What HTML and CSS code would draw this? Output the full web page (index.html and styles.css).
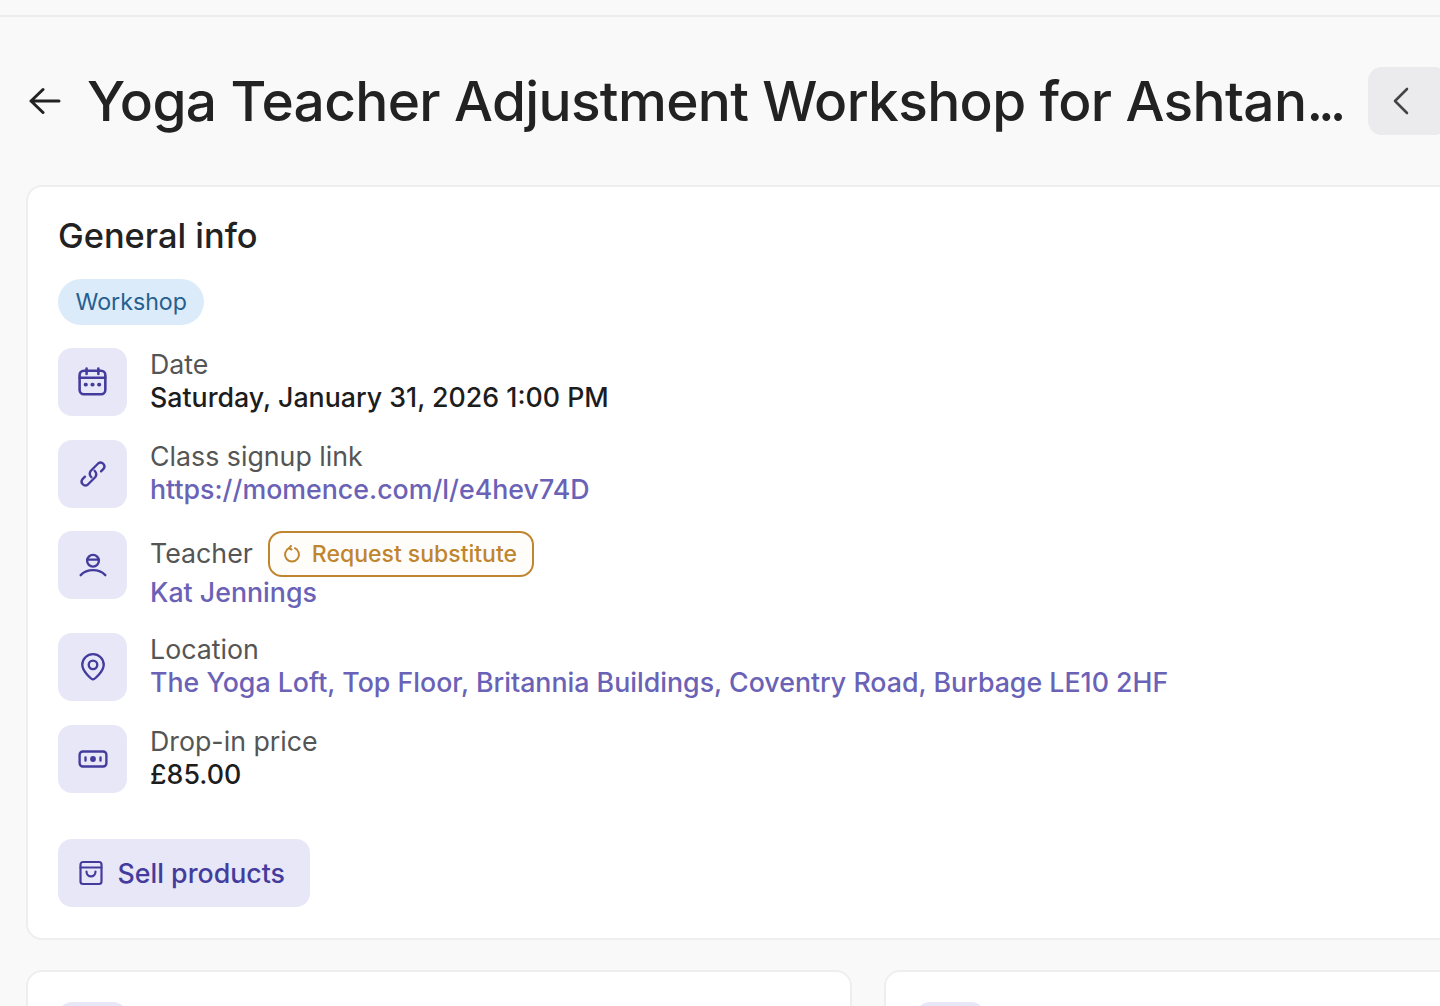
FILE: index.html
```html
<!DOCTYPE html>
<html lang="en">
<head>
    <meta charset="UTF-8">
    <meta name="viewport" content="width=device-width, initial-scale=1.0">
    <title>Yoga Teacher Adjustment Workshop</title>
    <link rel="stylesheet" href="styles.css">
</head>
<body>
    <div class="topbar"></div>
    <div class="page">
        <div class="header">
            <svg class="back-icon" viewBox="0 0 32 28" fill="none" stroke="#222" stroke-width="3" stroke-linecap="round" stroke-linejoin="round"><path d="M2 14h28M14 2.500 2 14l12 11.500"/></svg>
            <h1 class="title">Yoga Teacher Adjustment Workshop for Ashtan<span class="title-dots">...</span></h1>
            <button class="nav-btn">
                <svg viewBox="0 0 18 28" width="18" height="28" fill="none" stroke="#444" stroke-width="2.600" stroke-linecap="round" stroke-linejoin="round"><path d="M15 2 3 14l12 12"/></svg>
            </button>
        </div>

        <div class="card">
            <h2 class="card-title">General info</h2>
            <span class="badge">Workshop</span>

            <div class="info-list">
                <div class="info-row">
                    <div class="icon-box">
                        <svg viewBox="0 0 28 28" width="30" height="30" fill="none" stroke="#443c9c" stroke-width="2.400" stroke-linecap="round" stroke-linejoin="round"><rect x="1.500" y="3.500" width="24" height="22" rx="4"/><path d="M1.500 10h24M8 1.500v5M19 1.500v5"/><path d="M7 16.500h.5M13.300 16.500h.5M19.500 16.500h.5" stroke-width="3.400"/></svg>
                    </div>
                    <div class="info-text">
                        <div class="info-label">Date</div>
                        <div class="info-value">Saturday, January 31, 2026 1:00 PM</div>
                    </div>
                </div>

                <div class="info-row">
                    <div class="icon-box">
                        <svg viewBox="0 0 28 28" width="30" height="30" fill="none" stroke="#443c9c" stroke-width="2.200" stroke-linecap="round" stroke-linejoin="round"><path d="M12.500 17c-1.500-1.500-2-4-.5-6l7-7a3.600 3.600 0 0 1 5 5l-2.500 2.500"/><path d="M15.500 11c1.500 1.500 2 4 .5 6l-7 7a3.600 3.600 0 0 1-5-5l2.500-2.500"/></svg>
                    </div>
                    <div class="info-text">
                        <div class="info-label">Class signup link</div>
                        <a class="info-link" href="#">https://momence.com/l/e4hev74D</a>
                    </div>
                </div>

                <div class="info-row">
                    <div class="icon-box">
                        <svg viewBox="0 0 28 28" width="30" height="30" fill="none" stroke="#443c9c" stroke-width="2.200" stroke-linecap="round" stroke-linejoin="round"><circle cx="14" cy="10" r="5.500"/><path d="M8.500 9h11M2.500 23.500c3-3.200 7-4.700 11.500-4.700s8.500 1.500 11.500 4.700"/></svg>
                    </div>
                    <div class="info-text">
                        <div class="teacher-line">
                            <div class="info-label">Teacher</div>
                            <button class="sub-btn">
                                <svg viewBox="0 0 20 20" width="20" height="20" fill="none" stroke="#c0852f" stroke-width="2" stroke-linecap="round" stroke-linejoin="round"><path d="M7 4.200a7 7 0 1 0 6 0M7 4.200 9 2M7 4.200 9.500 5.500"/></svg>
                                Request substitute
                            </button>
                        </div>
                        <a class="info-link" href="#">Kat Jennings</a>
                    </div>
                </div>

                <div class="info-row">
                    <div class="icon-box">
                        <svg viewBox="0 0 28 28" width="30" height="30" fill="none" stroke="#443c9c" stroke-width="2.200" stroke-linecap="round" stroke-linejoin="round"><path d="M14 25.500c-1 0-10-7-10-13.500a10 10 0 0 1 20 0C24 18.500 15 25.500 14 25.500z"/><circle cx="14" cy="12" r="4"/></svg>
                    </div>
                    <div class="info-text">
                        <div class="info-label">Location</div>
                        <a class="info-link" href="#">The Yoga Loft, Top Floor, Britannia Buildings, Coventry Road, Burbage LE10 2HF</a>
                    </div>
                </div>

                <div class="info-row">
                    <div class="icon-box">
                        <svg viewBox="0 0 28 28" width="30" height="30" fill="none" stroke="#443c9c" stroke-width="2.200" stroke-linecap="round" stroke-linejoin="round"><rect x="1.500" y="7" width="25" height="14" rx="3"/><path d="M7 12.500v3M21 12.500v3"/><circle cx="14" cy="14" r="1.600" fill="#443c9c"/></svg>
                    </div>
                    <div class="info-text">
                        <div class="info-label">Drop-in price</div>
                        <div class="info-value">£85.00</div>
                    </div>
                </div>
            </div>

            <button class="sell-btn">
                <svg viewBox="0 0 28 28" width="28" height="28" fill="none" stroke="#443c9c" stroke-width="2.200" stroke-linecap="round" stroke-linejoin="round"><path d="M6 3h16a2.500 2.500 0 0 1 2.500 2.500v17A2.500 2.500 0 0 1 22 25H6a2.500 2.500 0 0 1-2.500-2.500v-17A2.500 2.500 0 0 1 6 3z"/><path d="M3.500 8.500h21M9.500 12.500c0 6.500 9 6.500 9 0"/></svg>
                Sell products
            </button>
        </div>

        <div class="bottom-cards">
            <div class="card small-card"><div class="icon-box"></div></div>
            <div class="card small-card"><div class="icon-box"></div></div>
        </div>
    </div>
</body>
</html>
```

FILE: styles.css
```css
html, body {
    margin: 0;
    height: 1006px;
    overflow: hidden;
}
body {
    font-family: Inter, "Liberation Sans", sans-serif;
    background-color: #f9f9f9;
    color: #222;
}
.topbar {
    height: 15px;
    border-bottom: 2px solid #ececec;
}
.page {
    width: 1500px;
    padding: 50px 0 0 26px;
}
.header {
    display: flex;
    align-items: center;
    height: 68px;
    margin-bottom: 50px;
}
.back-icon {
    width: 32px;
    height: 28px;
    margin-left: 3px;
    margin-right: 26px;
    flex: none;
}
.title {
    width: 1257px;
    margin: 0;
    font-size: 55px;
    font-weight: 500;
    letter-spacing: -0.65px;
    color: #222;
    white-space: nowrap;
    flex: none;
}
.title-dots {
    letter-spacing: -5px;
}
.nav-btn {
    width: 80px;
    height: 68px;
    margin-left: 24px;
    border: none;
    border-radius: 14px;
    background: #ebebed;
    display: flex;
    align-items: center;
    padding: 0 0 0 24px;
    flex: none;
}
.card {
    background: white;
    border: 2px solid #eeeeee;
    border-radius: 16px;
    padding: 29px 30px 31px 30px;
}
.card-title {
    margin: 0;
    font-size: 34.4px;
    line-height: 40px;
    font-weight: 500;
    color: #222;
}
.badge {
    display: inline-block;
    margin-top: 23px;
    padding: 0 17.5px;
    height: 46px;
    line-height: 46px;
    border-radius: 23px;
    background: #dcebfa;
    color: #25608f;
    font-size: 23.2px;
    font-weight: 400;
}
.info-list {
    margin-top: 23px;
    display: flex;
    flex-direction: column;
    gap: 23.7px;
}
.info-row {
    display: flex;
    gap: 23px;
    align-items: flex-start;
}
.icon-box {
    width: 69px;
    height: 68px;
    border-radius: 14px;
    background: #e8e7f8;
    display: flex;
    align-items: center;
    justify-content: center;
    flex: none;
}
.info-text {
    display: flex;
    flex-direction: column;
    align-items: flex-start;
}
.info-label {
    font-size: 26.75px;
    line-height: 32px;
    color: #555;
}
.info-value {
    font-size: 26.75px;
    line-height: 34px;
    font-weight: 500;
    color: #1d1d1d;
}
.info-link {
    font-size: 26.75px;
    line-height: 34px;
    font-weight: 500;
    color: #6a62b6;
    text-decoration: none;
}
.teacher-line {
    display: flex;
    align-items: center;
    gap: 15px;
    height: 44px;
}
.sub-btn {
    display: flex;
    align-items: center;
    gap: 10px;
    height: 46px;
    margin-top: 2px;
    padding: 0 15px 0 12px;
    border: 2px solid #c0852f;
    border-radius: 14px;
    background: #fffdf9;
    color: #c0852f;
    font-family: inherit;
    font-size: 23px;
    font-weight: 500;
}
.sell-btn {
    display: flex;
    align-items: center;
    gap: 12.5px;
    height: 68px;
    margin-top: 46px;
    padding: 0 25px 0 19px;
    border: none;
    border-radius: 14px;
    background: #e8e7f8;
    color: #443c9c;
    font-family: inherit;
    font-size: 26.75px;
    font-weight: 500;
}
.bottom-cards {
    display: flex;
    gap: 32px;
    margin-top: 30px;
}
.small-card {
    width: 762px;
    height: 200px;
    padding-top: 30px;
    flex: none;
}
```
